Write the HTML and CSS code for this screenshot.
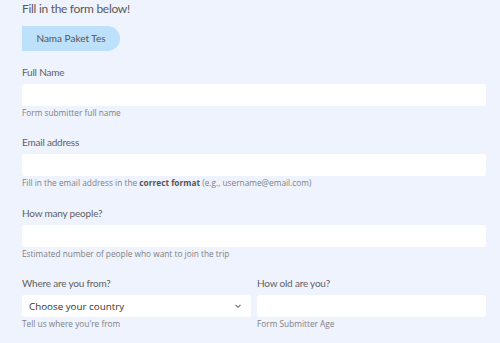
FILE: index.html
```html
<html><head>
<link rel="stylesheet" href="styles.css">
</head><body>
<div class="page">
  <h2 class="title">Fill in the form below!</h2>
  <div class="badge">Nama Paket Tes</div>

  <div class="field">
    <label class="label">Full Name</label>
    <input class="input" type="text">
    <div class="help">Form submitter full name</div>
  </div>

  <div class="field">
    <label class="label">Email address</label>
    <input class="input" type="text">
    <div class="help">Fill in the email address in the <b>correct format</b> (e.g., username@email.com)</div>
  </div>

  <div class="field">
    <label class="label">How many people?</label>
    <input class="input" type="text">
    <div class="help">Estimated number of people who want to join the trip</div>
  </div>

  <div class="row">
    <div class="field">
      <label class="label">Where are you from?</label>
      <div class="select">
        <span>Choose your country</span>
        <svg width="10" height="10" viewBox="0 0 10 10"><path d="M2.5 3.8 L5 6.3 L7.5 3.8" fill="none" stroke="#666" stroke-width="1.1"/></svg>
      </div>
      <div class="help">Tell us where you're from</div>
    </div>
    <div class="field">
      <label class="label">How old are you?</label>
      <input class="input" type="text">
      <div class="help">Form Submitter Age</div>
    </div>
  </div>
</div>
</body></html>
```

FILE: styles.css
```css
body {
    margin: 0;
    background-color: #eef3fe;
    font-family: "Lato", "Noto Sans", sans-serif;
    color: #555;
}
.page {
    padding: 1px 14px 0 22px;
}
.title {
    font-size: 12px;
    font-weight: normal;
    letter-spacing: -0.3px;
    line-height: 16px;
    margin: 0 0 9px 0;
    color: #5a5a5a;
}
.badge {
    display: inline-block;
    width: 98px;
    height: 25px;
    line-height: 25px;
    text-align: center;
    font-size: 10px;
    color: #555;
    background-color: #bde0fb;
    border-radius: 0 13px 13px 0;
    margin-bottom: 14px;
}
.field {
    display: flex;
    flex-direction: column;
    margin-bottom: 16.4px;
}
.label {
    font-size: 10px;
    letter-spacing: -0.2px;
    line-height: 14px;
    color: #5f5f5f;
    margin-bottom: 5px;
}
.input, .select {
    box-sizing: border-box;
    height: 22px;
    border: none;
    border-radius: 3px;
    background-color: #fff;
    width: 100%;
    margin: 0;
}
.select {
    display: flex;
    align-items: center;
    justify-content: space-between;
    padding: 0 8px 0 7px;
    font-family: "Open Sans", sans-serif;
    font-size: 9.8px;
    color: #333;
}
.help {
    font-family: "Open Sans", sans-serif;
    font-size: 8.3px;
    line-height: 12px;
    margin-top: 1px;
    color: #808080;
}
.help b {
    color: #555;
}
.row {
    display: grid;
    grid-template-columns: 1fr 1fr;
    gap: 6px;
}
```
